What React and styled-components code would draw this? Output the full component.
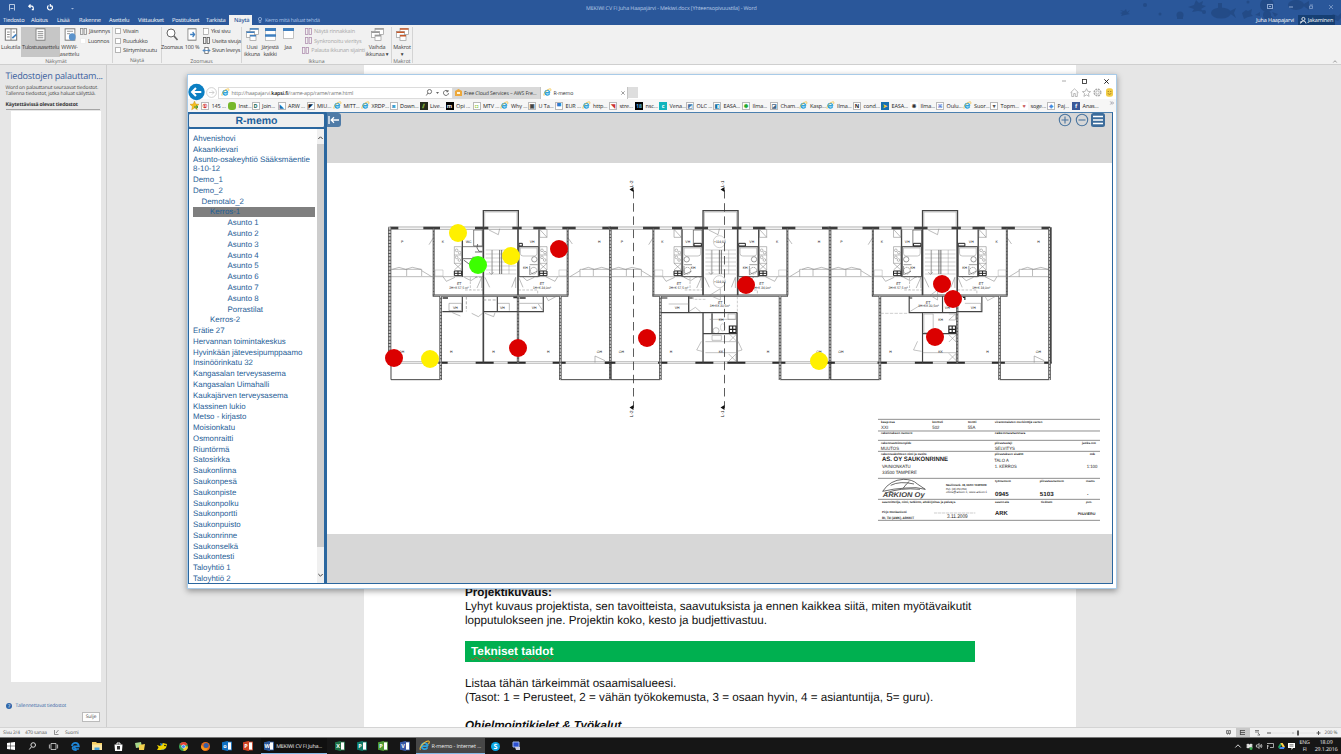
import React from "react";
import styled, { createGlobalStyle } from "styled-components";

const GlobalStyle = createGlobalStyle`
  * { box-sizing: border-box; }
  html, body { margin: 0; padding: 0; overflow: hidden; }
  body {
    font-family: "Open Sans", "Noto Sans", sans-serif;
    text-rendering: geometricPrecision;
    white-space: nowrap;
  }
  svg { display: block; flex: none; overflow: visible; }
`;

const Desktop = styled.div`
  position: relative;
  width: 1341px;
  height: 754px;
  display: flex;
  flex-direction: column;
  overflow: hidden;
  background: #e6e6e6;
`;

/* ---------- Word: title, tabs, ribbon ---------- */

const WordHeader = styled.header`
  position: relative;
  height: 25px;
  flex: none;
  background: #2a579a;
  color: #fff;
`;
const TitleBar = styled.div`
  position: relative;
  display: flex;
  align-items: center;
  height: 15px;
`;
const QuickAccess = styled.div`
  display: flex;
  align-items: center;
  width: 586px;
  padding-left: 9px;
`;
const IconSlot = styled.span`
  display: flex;
  width: ${(p) => p.$w}px;
`;
const DocTitle = styled.div`
  width: 170px;
  font-size: 5.4px;
  letter-spacing: ${(p) => p.$ls || 0}px;
  color: #b9cbe6;
`;
const WindowControls = styled.div`
  display: flex;
  align-items: center;
  margin-left: auto;
  margin-top: -2px;
  padding-right: 8px;
  gap: 16px;
`;
const TabBar = styled.nav`
  position: relative;
  display: flex;
  height: 10px;
`;
const Tab = styled.div`
  width: ${(p) => p.$w}px;
  padding-left: ${(p) => p.$pad || 0}px;
  height: 10px;
  line-height: 10px;
  font-size: 5.7px;
  letter-spacing: ${(p) => p.$ls ?? -0.18}px;
  color: ${(p) => (p.$active ? "#2b579a" : "#fff")};
  background: ${(p) => (p.$active ? "#f1f1f1" : "transparent")};
  font-weight: ${(p) => (p.$active ? 600 : 400)};
`;
const TellMe = styled.div`
  display: flex;
  align-items: center;
  gap: 3px;
  padding-left: 6px;
  font-size: 5.4px;
  letter-spacing: -0.22px;
  color: #a9c1e6;
`;
const Account = styled.div`
  display: flex;
  align-items: center;
  margin-left: auto;
  padding-right: 6px;
  gap: 4px;
  font-size: 5.5px;
  letter-spacing: -0.14px;
`;
const ShareButton = styled.div`
  display: flex;
  align-items: center;
  justify-content: center;
  gap: 2px;
  width: 37px;
  height: 10px;
  background: #163f73;
`;
const SeaArt = styled.svg`
  position: absolute;
  right: 0;
  top: 0;
`;

const Ribbon = styled.div`
  position: relative;
  display: flex;
  flex: none;
  height: 40px;
  background: #f1f1f1;
  border-bottom: 1px solid #cfcfcf;
  color: #3c3c3c;
  font-size: 5.5px;
`;
const RibbonGroup = styled.section`
  display: flex;
  flex-direction: column;
  width: ${(p) => p.$w}px;
  border-right: ${(p) => (p.$line ? "1px solid #d4d4d4" : "none")};
  margin: 2px 0 1px;
`;
const GroupBody = styled.div`
  display: flex;
  height: 30px;
  padding-left: ${(p) => p.$pad || 0}px;
`;
const GroupName = styled.div`
  text-align: center;
  font-size: 5.2px;
  line-height: 8px;
  color: #666;
  height: 7px;
`;
const BigButton = styled.div`
  width: ${(p) => p.$w}px;
  height: 30px;
  flex: none;
  display: flex;
  flex-direction: column;
  align-items: center;
  justify-content: flex-start;
  padding-top: ${(p) => p.$top ?? 1}px;
  background: ${(p) => (p.$on ? "#c6c6c6" : "transparent")};
`;
const BigLabel = styled.div`
  margin-top: 2.5px;
  line-height: 7px;
  text-align: center;
  letter-spacing: ${(p) => p.$ls ?? -0.15}px;
  white-space: pre;
`;
const SmallStack = styled.div`
  display: flex;
  flex-direction: column;
  gap: 1.6px;
  padding-top: 0px;
  width: ${(p) => p.$w}px;
`;
const SmallRow = styled.div`
  display: flex;
  align-items: center;
  gap: 2px;
  height: 8px;
  padding-left: 1px;
  color: ${(p) => (p.$off ? "#a8a8a8" : "#3c3c3c")};
  letter-spacing: ${(p) => p.$ls ?? -0.16}px;
`;
const CheckBox = styled.span`
  width: 6px;
  height: 6px;
  flex: none;
  background: #fff;
  border: 0.7px solid ${(p) => (p.$off ? "#eee" : "#b5b5b5")};
`;
const Collapse = styled.div`
  margin: auto 4px 1px auto;
`;

/* ---------- Word: body ---------- */

const Body = styled.main`
  display: flex;
  flex: 1;
  min-height: 0;
  background: #e6e6e6;
`;
const RecoveryPane = styled.aside`
  display: flex;
  flex-direction: column;
  width: 107px;
  border-right: 1px solid #cdcdcd;
  padding: 4px 6px 0 5.5px;
`;
const PaneTitle = styled.h2`
  margin: 0;
  height: 13px;
  line-height: 13px;
  font-size: 9.1px;
  font-weight: 400;
  letter-spacing: -0.22px;
  color: #3c62a0;
`;
const PaneText = styled.p`
  margin: 2.5px 0 0;
  font-size: 5px;
  line-height: 6.1px;
  letter-spacing: -0.09px;
  color: #444;
`;
const PaneSubtitle = styled.div`
  margin-top: 5.8px;
  height: 7.700px;
  font-size: 5.1px;
  line-height: 6.400px;
  font-weight: 700;
  letter-spacing: -0.14px;
  color: #333;
  border-bottom: 1px solid #a5a5a5;
`;
const FileList = styled.div`
  margin: 1px 0 0 5px;
  width: 90px;
  height: 571px;
  background: #fff;
`;
const PaneLink = styled.div`
  display: flex;
  align-items: center;
  gap: 4px;
  margin-top: 20px;
  height: 8px;
  font-size: 4.9px;
  letter-spacing: -0.15px;
  color: #3667a8;
`;
const CloseButton = styled.div`
  align-self: flex-end;
  margin-top: 2px;
  width: 18px;
  height: 10px;
  line-height: 9px;
  text-align: center;
  font-size: 4.8px;
  color: #444;
  background: #fdfdfd;
  border: 0.7px solid #bbb;
`;
const Page = styled.article`
  margin-left: 257px;
  width: 712px;
  padding: 520.500px 101px 0;
  overflow: hidden;
  background: #fff;
  color: #111;
  font-family: "Liberation Sans", Arial, sans-serif;
  font-size: 11.66px;
  line-height: 14px;
`;
const Line = styled.p`
  margin: ${(p) => p.$gap || 0}px 0 0;
  font-weight: ${(p) => (p.$bold ? 700 : 400)};
  font-style: ${(p) => (p.$italic ? "italic" : "normal")};
`;
const GreenBand = styled.h3`
  margin: 13.500px 0 0;
  width: 510px;
  height: 21px;
  padding-left: 6px;
  line-height: 21px;
  font-size: 11.8px;
  color: #fff;
  background: #00b050;
`;
const Misspelt = styled.span`
  text-decoration-line: underline;
  text-decoration-style: wavy;
  text-decoration-color: #b5532b;
  text-decoration-thickness: 0.6px;
  text-decoration-skip-ink: none;
  text-underline-offset: 1px;
`;

const StatusBar = styled.footer`
  display: flex;
  align-items: center;
  flex: none;
  height: 10px;
  padding-left: 3px;
  background: #f1f1f1;
  border-top: 1px solid #d4d4d4;
  font-size: 4.8px;
  color: #555;
`;
const StatusItem = styled.span`
  width: ${(p) => p.$w}px;
  letter-spacing: -0.1px;
`;
const StatusRight = styled.div`
  display: flex;
  align-items: center;
  flex: none;
  gap: 0;
  margin-left: auto;
  width: 120px;
`;
const ZoomSlider = styled.span`
  display: flex;
  margin: 0 4px 0 2px;
`;
const ViewButton = styled.span`
  display: flex;
  align-items: center;
  justify-content: center;
  flex: none;
  width: 14.5px;
  height: 9px;
  background: ${(p) => (p.$on ? "#c8c8c8" : "transparent")};
`;

/* ---------- Taskbar ---------- */

const Taskbar = styled.div`
  display: flex;
  align-items: stretch;
  flex: none;
  height: 17px;
  background: #161616;
  border-top: 1px solid #777;
  color: #eee;
`;
const TaskIcon = styled.span`
  display: flex;
  align-items: center;
  justify-content: center;
  width: 21.6px;
`;
const TaskWindow = styled.div`
  display: flex;
  align-items: center;
  gap: 2px;
  width: ${(p) => p.$w}px;
  margin: 0 ${(p) => p.$mr || 0}px 0 ${(p) => p.$ml || 0}px;
  padding-left: 3px;
  overflow: hidden;
  font-size: 5.4px;
  letter-spacing: ${(p) => p.$ls || 0}px;
  background: ${(p) => (p.$active ? "#474747" : "#101010")};
  border-bottom: 1.2px solid #84b9e6;
`;
const Tray = styled.div`
  display: flex;
  align-items: center;
  margin-left: auto;
  width: 108px;
`;
const TrayIcon = styled.span`
  display: flex;
  justify-content: center;
  width: 10.7px;
`;
const TrayText = styled.div`
  width: ${(p) => p.$w}px;
  text-align: center;
  font-size: 5.3px;
  letter-spacing: -0.12px;
  line-height: 7.3px;
`;

/* ---------- Browser window ---------- */

const Browser = styled.div`
  position: absolute;
  left: 187px;
  top: 74px;
  width: 930px;
  height: 515px;
  display: flex;
  flex-direction: column;
  background: #fff;
  border: 1px solid #a9cbe8;
  box-shadow: 0 2px 6px rgba(0, 0, 0, 0.38);
`;
const BrowserTitle = styled.div`
  display: flex;
  justify-content: flex-end;
  align-items: center;
  height: 11px;
  padding: 1px 7.5px 0 0;
  gap: 16.5px;
`;
const AddressRow = styled.div`
  display: flex;
  align-items: center;
  height: 13px;
`;
const BackButton = styled.span`
  width: 17px;
  height: 17px;
  margin: -3px 0 -2px 0;
  position: relative;
  z-index: 1;
`;
const ForwardButton = styled.span`
  display: flex;
  margin-left: 1px;
`;
const AddressField = styled.div`
  display: flex;
  align-items: center;
  margin-left: 1px;
  width: 235px;
  height: 12px;
  padding-left: 2px;
  gap: 2px;
  border: 1px solid #dcdcdc;
  font-size: 5.3px;
  letter-spacing: -0.16px;
  color: #777;
`;
const Host = styled.b`
  color: #111;
  font-weight: 600;
`;
const AddressTools = styled.span`
  display: flex;
  align-items: center;
  gap: 4px;
  margin-left: auto;
  padding-right: 3px;
`;
const BrowserTab = styled.div`
  display: flex;
  align-items: center;
  gap: 2px;
  width: ${(p) => p.$w}px;
  height: 12px;
  padding-left: 2px;
  font-size: 5.2px;
  letter-spacing: -0.12px;
  color: #333;
  background: ${(p) => (p.$active ? "#fff" : "#d9d9d9")};
  border-right: 1px solid #c4c4c4;
`;
const TabClose = styled.span`
  margin-left: auto;
  padding-right: 2px;
`;
const NewTab = styled.div`
  width: 10px;
  height: 11px;
  background: #dedede;
`;
const ToolIcons = styled.div`
  display: flex;
  gap: 2.6px;
  margin-left: auto;
  padding-right: 2px;
`;
const Favorites = styled.div`
  display: flex;
  align-items: center;
  height: 13px;
  padding-left: 2px;
  background: #f6f6f6;
  font-size: 5.5px;
  color: #222;
`;
const Favorite = styled.div`
  display: flex;
  align-items: center;
  gap: 2.5px;
  width: ${(p) => p.$w}px;
  letter-spacing: -0.1px;
`;
const Favicon = styled.span`
  width: 8px;
  height: 8px;
  flex: none;
  display: flex;
  align-items: center;
  justify-content: center;
  font-size: 5.5px;
  line-height: 6px;
  font-weight: 700;
  color: ${(p) => p.$fg || "#fff"};
  background: ${(p) => p.$bg};
  border: ${(p) => (p.$framed ? "1px solid #b9b9b9" : "none")};
  border-radius: ${(p) => p.$r || 0}px;
`;

/* ---------- R-memo ---------- */

const Memo = styled.div`
  display: flex;
  height: 472px;
  margin-right: 3px;
  background: #2b679f;
`;
const MemoSide = styled.div`
  display: flex;
  flex-direction: column;
  width: 137px;
  padding: 1px 0 1px;
  gap: 1px;
`;
const MemoHeading = styled.h1`
  margin: 0;
  height: 15px;
  line-height: 14px;
  text-align: center;
  font-family: "Liberation Sans", Arial, sans-serif;
  font-size: 10.5px;
  color: #1c609b;
  background: #eee;
  border: 1px solid #2b679f;
  border-radius: 2px;
`;
const TreeBox = styled.div`
  display: flex;
  flex: 1;
  min-height: 0;
  border: 1px solid #2b679f;
  border-width: 0 1px 0 1px;
  background: #fff;
`;
const Tree = styled.ul`
  margin: 0;
  padding: 3.9px 2px 0 4px;
  width: 128px;
  list-style: none;
  overflow: hidden;
  font-family: "Liberation Sans", Arial, sans-serif;
  font-size: 7.88px;
  line-height: 9px;
  color: #1f6097;
`;
const TreeItem = styled.li`
  padding: 0.9px 0 0.9px ${(p) => p.$indent}px;
  white-space: pre;
  background: ${(p) => (p.$on ? "#7f7f7f" : "transparent")};
`;
const ScrollTrack = styled.div`
  display: flex;
  flex-direction: column;
  align-items: center;
  justify-content: space-between;
  width: 7px;
  padding: 7px 0 6px;
  background: #f0f0f0;
`;
const ScrollThumb = styled.div`
  width: 7px;
  height: 403px;
  margin: 4px 0 auto;
  background: #cdcdcd;
`;
const Viewer = styled.section`
  position: relative;
  display: flex;
  flex-direction: column;
  width: 788px;
  margin-left: 1px;
  border: 1px solid #2b679f;
  border-top-color: #4b7fae;
  background: #d7d7d7;
`;
const ViewerBar = styled.div`
  display: flex;
  align-items: flex-start;
  justify-content: space-between;
  height: 50px;
`;
const ViewerTools = styled.div`
  display: flex;
  align-items: center;
  gap: 2.5px;
  padding-right: 7px;
`;
const PlanCanvas = styled.div`
  position: relative;
  height: 370.5px;
  overflow: hidden;
  background: #fff;
`;
const Pin = styled.span`
  position: absolute;
  left: ${(p) => p.$x - 327 - 9}px;
  top: ${(p) => p.$y - 163 - 9}px;
  width: 18px;
  height: 18px;
  border-radius: 50%;
  background: ${(p) => p.$c};
`;

/* ---------- Data ---------- */

const tabs = [
  ["Tiedosto", 28], ["Aloitus", 26], ["Lisää", 22], ["Rakenne", 30], ["Asettelu", 29],
  ["Viittaukset", 34], ["Postitukset", 34], ["Tarkista", 23],
];

const tree = [
  ["Ahvenishovi"], ["Akaankievari"], ["Asunto-osakeyhtiö Sääksmäentie\n8-10-12"], ["Demo_1"],
  ["Demo_2"], ["Demotalo_2", 8.5], ["Kerros-1", 17, true], ["Asunto 1", 34.5], ["Asunto 2", 34.5],
  ["Asunto 3", 34.5], ["Asunto 4", 34.5], ["Asunto 5", 34.5], ["Asunto 6", 34.5],
  ["Asunto 7", 34.5], ["Asunto 8", 34.5], ["Porrastilat", 34.5], ["Kerros-2", 17],
  ["Erätie 27"], ["Hervannan toimintakeskus"], ["Hyvinkään jätevesipumppaamo"],
  ["Insinöörinkatu 32"], ["Kangasalan terveysasema"], ["Kangasalan Uimahalli"],
  ["Kaukajärven terveysasema"], ["Klassinen lukio"], ["Metso - kirjasto"], ["Moisionkatu"],
  ["Osmonraitti"], ["Riuntörmä"], ["Satosirkka"], ["Saukonlinna"], ["Saukonpesä"],
  ["Saukonpiste"], ["Saukonpolku"], ["Saukonportti"], ["Saukonpuisto"], ["Saukonrinne"],
  ["Saukonselkä"], ["Saukontesti"], ["Taloyhtiö 1"], ["Taloyhtiö 2"],
];

const favorites = [
  ["145 ...", 27, "#fff", "①", "#c22", 1], ["Inst...", 23.5, "#76b82a", "", "#fff", 0, 3],
  ["Join...", 26, "#fff", "D", "#176b5b", 1], ["ARW ...", 29, "#fff", "◣", "#1b6fb0", 1],
  ["MIU...", 26, "#fff", "◤", "#123", 1], ["MITT...", 28, "ie"], ["XRDP...", 29, "ie"],
  ["Down...", 30, "#fff", "◙", "#39c", 1], ["Live...", 26, "#232b1c", "⫽", "#9ac93c"],
  ["Opi ...", 27, "#000", "m"], ["MTV ...", 27.5, "#fff", "◘", "#8cc63f", 1],
  ["Why ...", 28, "ie"], ["U Ta...", 27, "#fff", "▣", "#444", 1], ["EUR ...", 27, "#fff", "▀", "#2a7fd0", 1],
  ["http...", 27, "ie"], ["stre...", 26, "#fff", "◥", "#c33", 1], ["nsc...", 24, "#000", "18", "#5ad"],
  ["Vena...", 27, "#12b5bd", "c"], ["OLC ...", 27, "#fff", "◩", "#47a", 1],
  ["EASA...", 29, "#fff", "◧", "#17a", 1], ["Ilma...", 28, "#fff", "✽", "#2a3", 1],
  ["Cham...", 29, "#fff", "◪", "#468", 1], ["Kasp...", 27, "ie"], ["Ilma...", 27, "ie"],
  ["cond...", 28, "#fff", "N", "#222", 1], ["EASA...", 29, "#1570b0", "➤", "#fc3"],
  ["Ilma...", 26, "#fff", "❋", "#333"], ["Oulu...", 27, "#fff", "※", "#36c", 1],
  ["Suor...", 27, "ie"], ["Topm...", 30, "#fff", "▾", "#555", 1], ["soge...", 27, "#fff", "♥", "#c66"],
  ["Paj...", 25, "#fff", "◈", "#48d", 1], ["Anas...", 38, "#3b5998", "f"],
];

const RED = "#db0000";
const YELLOW = "#fff000";
const pins = [
  [458, 233, YELLOW], [478, 265, "#3cff00"], [511, 255.5, YELLOW], [559, 249, RED],
  [393.5, 358, RED], [430, 359, YELLOW], [518, 348, RED], [647, 338, RED],
  [746, 285, RED], [818.5, 360.5, YELLOW], [942, 284, RED], [953, 299, RED], [934.5, 337, RED],
];

/* ---------- Icons ---------- */

const Ie = ({ s = 8.5 }) => (
  <svg width={s} height={s} viewBox="0 0 16 16" fill="none">
    <path d="M13 9H3.5a4.8 4.8 0 0 0 9 1.8M3.6 7.4a4.8 4.8 0 0 1 9.2 1.4" stroke="#2fa4de" strokeWidth="2.6" />
    <path d="M2 14.5C-.5 11 9 1 14 1.600c1.800.7.8 3-.3 4.400" stroke="#f1bd34" strokeWidth="1.5" />
  </svg>
);
const PageIcon = ({ s = 13, children, w }) => (
  <svg width={w || s} height={s} viewBox="0 0 16 16" preserveAspectRatio="none">
    <rect x="1.500" y="1" width="13" height="14" fill="#fff" stroke="#777" strokeWidth="1.200" />
    {children || <path d="M4 4.500h8M4 7h8M4 9.500h8M4 12h8" stroke="#777" strokeWidth="1.100" />}
  </svg>
);
const WindowIcon = ({ n = 1, w = 11, h = 13 }) => (
  <svg width={w} height={13} viewBox="0 0 11 13">
    <rect x=".4" y=".4" width="10.200" height={h - 0.8} fill="#fff" stroke="#aaa" strokeWidth=".7" />
    <path d="M0 1.500h11" stroke="#3f7fbf" strokeWidth="3" />
    {n > 1 && <path d="M0 7.500h11" stroke="#3f7fbf" strokeWidth="2.500" />}
  </svg>
);
const Cascade = ({ color = "#3f7fbf" }) => (
  <svg width="13" height="13" viewBox="0 0 13 13" fill="#fff" stroke="#999" strokeWidth=".7">
    <rect x="4" y=".5" width="8.500" height="6" /><rect x=".5" y="3.500" width="8" height="6" />
    <rect x="4" y="7" width="6" height="5.500" />
    <path d="M4 1h8.500M.5 4.200h8M4 7.700h6" stroke={color} strokeWidth="1.600" />
  </svg>
);
const TinyIcon = ({ c = "#888" }) => (
  <svg width="7" height="7" viewBox="0 0 7 7" fill="none" stroke={c} strokeWidth=".8">
    <rect x=".5" y=".5" width="2.400" height="6" /><rect x="4.100" y=".5" width="2.400" height="6" />
  </svg>
);
const WidthIcon = () => (
  <svg width="7" height="7" viewBox="0 0 7 7" fill="#fff" stroke="#666" strokeWidth=".8">
    <rect x="1.800" y=".5" width="3.400" height="6" />
    <path d="M0 3.500h7M1.500 2 0 3.500 1.500 5M5.500 2 7 3.500 5.500 5" fill="none" stroke="#3f7fbf" />
  </svg>
);
const Sheet = ({ letter, c }) => (
  <svg width="10" height="10" viewBox="0 0 10 10">
    <rect x="4" y="1" width="5.500" height="8" fill="#fff" stroke={c} strokeWidth=".8" />
    <path d="M0 1.200 6 0v10L0 8.800z" fill={c} />
    <text x="3" y="7" textAnchor="middle" fontSize="5.500" fontWeight="700" fill="#fff">{letter}</text>
  </svg>
);

/* ---------- Floor plan ---------- */

const T = ({ x, y, children, w, size = 10.5, bold, fill = "#1c1c1c" }) => (
  <text x={x} y={y} fontSize={size} fontWeight={bold ? 700 : 400} fill={fill}
    textLength={w} lengthAdjust={w ? "spacingAndGlyphs" : undefined}>{children}</text>
);

const Wall = ({ d, w = 7 }) => (
  <>
    <path d={d} stroke="#555" strokeWidth={w} />
    <path d={d} stroke="#c4c4c4" strokeWidth={w - 4.500} strokeDasharray="7 3" />
  </>
);

const Kitchen = ({ x }) => (
  <g stroke="#777" strokeWidth="1.500">
    <path d={`M${x} 178h22v24h-22zM${x} 178l22 24M${x} 230h22v50h-22zM${x} 255h22M${x} 280l22 20v-20l-22 20`} />
    <circle cx={x + 7} cy="241" r="4" /><circle cx={x + 16} cy="248" r="4" />
    <circle cx={x + 7} cy="262" r="4" /><circle cx={x + 15} cy="270" r="4" />
    <path d={`M${x} 303h22v14h-22zM${x + 11} 303v14M${x} 310h22`} stroke="#222" strokeWidth="3" />
  </g>
);

const Bath = ({ x, w = 60, flip }) => (
  <g stroke="#555" strokeWidth="1.700">
    <path d={`M${x} 230h${w}v90h-${w}z`} strokeWidth="3" />
    <path d={`M${x + 4} 234h${w - 8}v16q0 8-8 8h-${w - 24}q-8 0-8-8z`} stroke="#999" />
    <ellipse cx={flip ? x + w - 12 : x + 12} cy="268" rx="8" ry="8" />
    <circle cx={flip ? x + w - 14 : x + 14} cy="302" r="10" strokeDasharray="4 2" />
    <path d={`M${flip ? x + w - 26 : x + 4} 284h24M${flip ? x + w - 26 : x + 4} 288v26l22-10`} />
    <text x={flip ? x + 12 : x + w - 34} y="298" fontSize="10.5" stroke="none" fill="#222">KH</text>
  </g>
);

const Block = ({ kind, x }) => (
  <g transform={`translate(${x} 170) scale(.33333)`} fill="none">
    <g stroke="#777" strokeWidth="1.500">
      <path d="M48 320H325M430 320H708M48 298h92v20M95 298v20M615 298h92M655 298v20M615 298v22" />
      <path d="M52 298l20-6 20 6 20-6 26 6M622 298l18-6 18 6 22-6 22 6" />
      <path d="M180 300h24v18h-24zM552 300h24v18h-24z" stroke="#aaa" />
      <path d="M140 302l30 18M615 302l-30 18M162 224l14-22v22M592 222l-14-20v22M204 320l10 14 26-12M548 320l-8 14-28-14M268 322l20 10 18-12M478 322l-22 10-14-12" />
      <path d="M306 354l14-32v32M344 352l-14-30M410 352l12-30v32M444 352l-12-28M342 180l28 14 4-18M660 578v-20l30 14" />
    </g>
    <g stroke="#9a9a9a" strokeWidth="1.400">
      <path d="M332 240h92M332 252h92M332 264h92M332 276h92M332 288h92M332 300h92M332 312h92M350 240v72M402 240v72" />
      <path d="M374 240v72M380 240v72" stroke="#555" strokeWidth="2.500" />
      <path d="M342 306l7 8 7-8M352 312v-72" stroke="#777" />
    </g>
    <path d="M262 176v144M492 176v144" stroke="#444" strokeWidth="4" />
    <path d="M262 230h62M430 230h62M296 180h26v48h-26z" stroke="#444" strokeWidth="2" />
    <Kitchen x={238} />
    <Kitchen x={494} />
    {kind === 0 ? (
      <path d="M262 266h62M292 262h14M308 222q-6 12 4 22h10M266 270l24 18M300 246h22" stroke="#555" strokeWidth="2.500" />
    ) : (
      <Bath x={264} w={58} />
    )}
    <Bath x={432} w={58} flip />
    <path d={kind === 0 ? "M432 220h10v8h-10z" : "M298 220h22v8h-22zM432 220h20v8h-20z"} stroke="#222" strokeWidth="3" />
    <path d="M176 322v52M578 322v52M286 322v38M300 322h24M430 360h58v14M270 360h54" stroke="#888" strokeWidth="1.500" strokeDasharray="8 4" />

    {/* outer walls and windows */}
    <path d="M40 171H708M40 178H708" stroke="#888" strokeWidth="2" />
    <path d="M45 174H70M145 174H195M232 174H262M300 174H340M412 174H440M475 174H512M562 174H602M682 174H708" stroke="#3c3c3c" strokeWidth="8" />
    <path d="M40 575H708M40 580H708" stroke="#888" strokeWidth="1.700" />
    <path d={kind === 0 ? "M190 578H218M302 578H356M398 578H452M533 578H572M690 578H712" : "M30 578H62M190 578H218M302 578H356M398 578H452M533 578H572M690 578H712"} stroke="#2c2c2c" strokeWidth="6" />
    <path d="M325 172V122H430V172" stroke="#444" strokeWidth="4" />
    <path d="M329 172V126H426V172" stroke="#888" strokeWidth="1.500" />
    <path d="M48 580V629H197V580M556 580V629H706V580" stroke="#444" strokeWidth="3" />
    <path d="M173 377H580" stroke="#444" strokeWidth="7" />
    <path d="M176 377H578" stroke="#ddd" strokeWidth="2" />
    <path d="M325 320V376M429 176V376M325 176V320" stroke="#444" strokeWidth="5" />
    <Wall d="M176 176V376M578 176V376" w={6} />
    <Wall d="M197 378V630M556 378V630M706 174V630" w={8} />

    {kind === 0 && (
      <g stroke="#444">
        <Wall d="M44 172V580" w={10} />
        <Wall d="M429 376V578" />
        <path d="M325 376V578" strokeWidth="5" />
        <path d="M202 425H262V380M325 425H429M367 380v45M431 425H505V380" strokeWidth="3.500" />
        <path d="M222 400h38v22h-38zM369 400h34v22M433 400h70M505 380v42M490 402l12 18M232 428l24 10M290 430l20 10 15-12M330 430l26 10 4-12M512 378l8 14 26-14" stroke="#777" strokeWidth="1.500" />
        <path d="M274 380v44M325 390h40" stroke="#888" strokeWidth="2" strokeDasharray="9 5" />
        <path d="M203 384h16M434 384h18M415 382h12" stroke="#333" strokeWidth="5" />
      </g>
    )}
    {kind === 1 && (
      <g stroke="#444">
        <path d="M199 428H428M282 378v50" strokeWidth="4" />
        <path d="M325 428V578M427 428V578M325 491h102M352 430v60" strokeWidth="4" />
        <path d="M404 468h20v20h-20zM414 468v20M404 478h20M200 384h18M284 384h10" stroke="#222" strokeWidth="3.500" />
        <path d="M222 402h60M284 424l18-12 16 14M352 496h28v15h-28zM332 548h94M332 515h94M404 492l22 22v-22l-22 22M402 552l22 22v-22l-22 22M320 514l-14 26 16 4M430 514l12 26-14 4M345 376l32-20v34zM400 432h22v16h-22zM345 448h80" stroke="#888" strokeWidth="1.500" />
        <circle cx="364" cy="482" r="9" /><ellipse cx="384" cy="472" rx="7" ry="11" stroke="#888" />
        <circle cx="374" cy="215" r="18" stroke="#777" /><circle cx="374" cy="335" r="18" stroke="#777" />
        <path d="M428 380v45M296 380v8h36" stroke="#999" strokeWidth="1.500" strokeDasharray="8 4" />
      </g>
    )}
    {kind === 2 && (
      <g stroke="#444">
        <Wall d="M429 376V578" />
        <path d="M710 172V580" strokeWidth="5" />
        <path d="M325 428V578M285 378V428H428M385 378v50M429 425H503V380M325 491h102" strokeWidth="3.500" />
        <path d="M404 468h20v20h-20zM414 468v20M404 478h20M446 382h6v8M286 384h8" stroke="#222" strokeWidth="3.500" />
        <path d="M329 432h28v56h-28zM404 494l22 22v-22l-22 22M404 550l22 22v-22l-22 22M404 432h20v18h-20l20-18M348 376l22-16v30zM310 514l-12 26 24 4M452 400h48v22M288 424l30-18M512 378l8 14 26-14M325 548h102" stroke="#888" strokeWidth="1.500" />
        <path d="M199 430h84" stroke="#999" strokeWidth="1.500" strokeDasharray="10 4" />
      </g>
    )}

    <T x={78} y={219}>P</T><T x={200} y={219}>K</T><T x={272} y={219}>{kind ? "VH" : "WC"}</T>
    <T x={464} y={219}>VH</T><T x={544} y={219}>K</T><T x={669} y={219}>H</T>
    <T x={246} y={345}>ET</T><T x={223} y={357} w={58}>2H+K 57,5 m²</T>
    <T x={494} y={345}>ET</T><T x={474} y={357} w={54}>1H+K 34,0m²</T>
    <T x={72} y={548}>OH</T><T x={225} y={548}>H</T><T x={516} y={548}>H</T><T x={665} y={548}>OH</T>
    {kind === 0 && <><T x={352} y={548}>H</T><T x={234} y={417}>VH</T><T x={375} y={417}>VH</T><T x={470} y={417}>VH</T></>}
    {kind === 1 && <><T x={372} y={548}>KK</T><T x={240} y={417}>VH</T><T x={345} y={412} w={60}>1H+KK 30,5m²</T><T x={370} y={401}>ET</T><T x={372} y={452}>KH</T><T x={358} y={218} w={34}>+114,60</T><T x={358} y={338} w={34}>+114,00</T></>}
    {kind === 2 && <><T x={372} y={548}>KK</T><T x={335} y={401}>ET</T><T x={312} y={412} w={62}>1H+KK 30,5m²</T><T x={372} y={452}>KH</T><T x={392} y={417}>VH</T><T x={470} y={417}>VH</T></>}
  </g>
);

const Section = ({ x, n }) => (
  <g stroke="#333" fill="#111">
    <path d={`M${x} 190V408`} strokeWidth=".8" strokeDasharray="8.500 4.700" />
    <path d={`M${x} 187v5l-4-2.500zM${x} 405v5l-4-2.500z`} stroke="none" />
    <g fontSize="4.500" stroke="none">
      <text transform={`translate(${x - 0.500} 187) rotate(-90)`}>L-{n}</text>
      <text transform={`translate(${x - 0.500} 417) rotate(-90)`}>L-{n}</text>
    </g>
  </g>
);

const TitleBlock = () => (
  <g transform="translate(870 410) scale(.33333)">
    <path d="M24 28H690M24 63H690M24 91H690M24 124H690M24 205H690M24 268H690M24 331H690" stroke="#777" strokeWidth="2.500" />
    <T x={33} y={39} w={41} size={9} bold>kaup.osa</T><T x={187} y={39} w={32} size={9} bold>kortteli</T>
    <T x={294} y={39} w={25} size={9} bold>tontti</T><T x={374} y={39} w={143} size={9} bold>viranomaisten merkintöjä varten</T>
    <T x={33} y={56} w={22} size={14}>XXI</T><T x={187} y={56} w={21} size={14}>502</T><T x={293} y={56} w={23} size={14}>55A</T>
    <T x={33} y={72} w={94} size={9} bold>rakennuksen numero</T><T x={374} y={72} w={92} size={9} bold>rakennustunnus</T>
    <T x={33} y={103} w={91} size={9} bold>rakennustoimenpide</T><T x={374} y={103} w={52} size={9} bold>piirustuslaji</T><T x={636} y={103} w={42} size={9} bold>juoks.nro</T>
    <T x={32} y={120} w={55} size={14}>MUUTOS</T><T x={374} y={120} w={61} size={14}>SELVITYS</T>
    <T x={33} y={135} w={137} size={9} bold>rakennuskohteen nimi ja osoite</T><T x={374} y={135} w={86} size={9} bold>piirustuksen sisältö</T><T x={659} y={135} w={16} size={9} bold>mk</T>
    <T x={36} y={152} w={198} size={19} bold>AS. OY SAUKONRINNE</T>
    <T x={36} y={174} w={86} size={14}>VAINIONKATU</T><T x={36} y={193} w={105} size={14}>33500  TAMPERE</T>
    <T x={373} y={155} w={43} size={14}>TALO A</T><T x={374} y={174} w={66} size={14}>1. KERROS</T><T x={650} y={174} w={32} size={14}>1:100</T>
    <g fill="none" stroke="#222" strokeWidth="2">
      <path d="M38 244Q60 210 100 208Q128 208 142 222L166 238Q140 230 108 234Q70 236 38 244M62 226Q90 212 132 222M100 234q10-14 18-20" />
      <path d="M45 250Q90 232 150 238" />
    </g>
    <text x="38" y="262" fontSize="21" fontWeight="700" fontStyle="italic" textLength="126" lengthAdjust="spacingAndGlyphs" fill="#444">ARKION Oy</text>
    <T x={228} y={229} w={122} size={9} bold>Näsilinnank. 48, 33200 TAMPERE</T><T x={228} y={240} w={62} size={9}>Puh. (03) 254 2500</T><T x={228} y={250} w={123} size={9}>office@arkion.fi, www.arkion.fi</T>
    <T x={375} y={216} w={48} size={9} bold>työnumero</T><T x={509} y={216} w={73} size={9} bold>piirustusnumero</T><T x={648} y={216} w={26} size={9} bold>muutos</T>
    <T x={375} y={257} w={41} size={18} bold>0945</T><T x={509} y={257} w={42} size={18} bold>5103</T><T x={651} y={256} size={16} bold>.</T>
    <T x={36} y={280} w={220} size={9} bold>suunnittelija, nimi, tutkinto, allekirjoitus ja päiväys</T>
    <T x={375} y={280} w={42} size={9} bold>suunn.ala</T><T x={513} y={280} w={34} size={9} bold>tiedosto</T><T x={648} y={280} w={18} size={9} bold>pvm.</T>
    <T x={36} y={310} w={74} size={9} bold>Pirjo Honkaniemi</T><T x={36} y={327} w={96} size={10} bold>RI, TkI (AMK), ARKKIT</T>
    <path d="M192 309H316" stroke="#999" strokeWidth="1.500" strokeDasharray="10 2" />
    <T x={231} y={323} w={62} size={16}>3.11.2009</T>
    <T x={375} y={315} w={38} size={18} bold>ARK</T><T x={623} y={314} w={53} size={11} bold>PIILVIERU</T>
  </g>
);

const FloorPlan = () => (
  <svg width="785" height="370" viewBox="327 163 785 370" fontFamily="Liberation Sans, Arial, sans-serif">
    <Block kind={0} x={375} />
    <Block kind={1} x={594.700} />
    <Block kind={2} x={814.200} />
    <Section x={633.500} n={2} />
    <Section x={724.500} n={1} />
    <TitleBlock />
  </svg>
);

/* ---------- Screen parts ---------- */

const WordTop = () => (
  <WordHeader>
    <SeaArt width="251" height="25" viewBox="0 0 251 25" fill="#234b87">
      <path d="M30 10l4 1 2-2 1 3 3-2-2 3 2 1-5 1-4 1 1-2-2-1 3-1zM98 7l6-2 2-5 3 3 4-2-1 4 4 1-5 3 3 3-6-1-6 1 2-3zM152 13l4-3 2 1 4-2-1 5 2 2-5 1-4 2zM240 18l3-4 5 2 3-3 1 4-4 4z" />
      <ellipse cx="55" cy="5" rx="2" ry="2" /><circle cx="70" cy="14" r="1.500" /><circle cx="90" cy="15" r="3.500" /><circle cx="114" cy="12" r="2" />
      <ellipse cx="131" cy="13" rx="10" ry="5.500" /><path d="M128 3h4v6h-4zM138 12l8-4-2 5 2 5z" />
      <circle cx="177" cy="15" r="4" /><circle cx="177" cy="5" r="7" /><circle cx="180" cy="19" r="3" />
      <ellipse cx="206" cy="5" rx="8" ry="5" /><path d="M212 5l7-4v9z" /><circle cx="158" cy="2" r="1.500" />
      <path d="M87 17h6v2h-6zM182 12l6 2-3 3zM170 12l-5 3 5 1z" />
    </SeaArt>
    <TitleBar>
      <QuickAccess>
        <IconSlot $w={19}><svg width="6" height="7" viewBox="0 0 6 7" fill="none" stroke="#dfe8f5"><path d="M.5 6.500V.5h5v6M1.500 4.500h3" strokeWidth=".8" /></svg></IconSlot>
        <IconSlot $w={19}><svg width="6" height="7" viewBox="0 0 6 7" fill="none" stroke="#fff" strokeWidth="1.200"><path d="M2.500.5.8 2.200l1.700 1.700M1 2.200h3q1.500.3 1.300 3.500h-1.500" /></svg></IconSlot>
        <IconSlot $w={24}><svg width="6" height="7" viewBox="0 0 6 7" fill="none" stroke="#fff" strokeWidth="1.200"><path d="M4.500 1.500A2.500 2.500 0 1 1 1.500 1.500M3.300 0v2.200h2.200" /></svg></IconSlot>
        <svg width="3" height="4" viewBox="0 0 3 4"><path d="M0 2l1.500 1.500L3 2z" fill="#9db5d9" /></svg>
      </QuickAccess>
      <DocTitle $ls={-0.13}>MEKIWI CV FI Juha Haapajärvi - Mekiwi.docx [Yhteensopivuustila] - Word</DocTitle>
      <WindowControls>
        <svg width="6" height="5" viewBox="0 0 6 5" fill="none" stroke="#8fa9d2"><rect x=".5" y=".5" width="5" height="4" /><path d="M2 2.500h2" /></svg>
        <svg width="4" height="4" viewBox="0 0 4 4" stroke="#8fa9d2"><path d="M0 2h4" /></svg>
        <svg width="4" height="5" viewBox="0 0 4 5" fill="none" stroke="#8fa9d2" strokeWidth=".7"><path d="M.5 2h3v2.500h-3zM1 1h3" /></svg>
        <svg width="4" height="4" viewBox="0 0 4 4" stroke="#8fa9d2" strokeWidth=".7"><path d="M0 0l4 4M4 0 0 4" /></svg>
      </WindowControls>
    </TitleBar>
    <TabBar>
      {tabs.map(([t, w], i) => <Tab key={t} $w={i ? w : w + 3} $pad={i ? 0 : 3}>{t}</Tab>)}
      <Tab $active $w={23} $pad={5}>Näytä</Tab>
      <TellMe>
        <svg width="4" height="7" viewBox="0 0 4 7" fill="none" stroke="#a9c1e6" strokeWidth=".7"><circle cx="2" cy="2" r="1.600" /><path d="M1.200 3.500v2h1.600v-2" /></svg>
        Kerro mitä haluat tehdä
      </TellMe>
      <Account>
        Juha Haapajarvi
        <ShareButton>
          <svg width="6" height="7" viewBox="0 0 6 7" fill="none" stroke="#fff" strokeWidth=".8"><circle cx="3.400" cy="2" r="1.600" /><path d="M.5 6.500Q1 4 3.400 4T6 6.500M0 5h2" /></svg>
          Jakaminen
        </ShareButton>
      </Account>
    </TabBar>
  </WordHeader>
);

const RibbonBar = () => (
  <Ribbon>
    <RibbonGroup $w={113} $line>
      <GroupBody>
        <BigButton $w={21}><PageIcon w={14}><path d="M8 1v14M3.500 5h3M3.500 8h3M3.500 11h3M10 5h2.500" stroke="#777" strokeWidth="1" /><path d="M9.500 12.500 14 8" stroke="#3f7fbf" strokeWidth="2" /></PageIcon><BigLabel>Lukutila</BigLabel></BigButton>
        <BigButton $w={39} $on><PageIcon w={11} /><BigLabel $ls={-0.32}>Tulostusasettelu</BigLabel></BigButton>
        <BigButton $w={19}><PageIcon w={12}><path d="M4 4h8M4 7h4" stroke="#777" /><circle cx="11" cy="11" r="4.500" fill="#5b93cc" /></PageIcon><BigLabel>{"WWW-\nasettelu"}</BigLabel></BigButton>
        <SmallStack $w={32}>
          <SmallRow><TinyIcon />Jäsennys</SmallRow>
          <SmallRow><CheckBox $off />Luonnos</SmallRow>
        </SmallStack>
      </GroupBody>
      <GroupName>Näkymät</GroupName>
    </RibbonGroup>
    <RibbonGroup $w={49} $line>
      <GroupBody $pad={1}>
        <SmallStack $w={46}>
          <SmallRow><CheckBox />Viivain</SmallRow>
          <SmallRow><CheckBox />Ruudukko</SmallRow>
          <SmallRow><CheckBox />Siirtymisruutu</SmallRow>
        </SmallStack>
      </GroupBody>
      <GroupName>Näytä</GroupName>
    </RibbonGroup>
    <RibbonGroup $w={80} $line>
      <GroupBody>
        <BigButton $w={20}><svg width="12" height="13" viewBox="0 0 12 13" fill="#fff" stroke="#666"><circle cx="5" cy="5" r="4" /><path d="M8 8l3.500 4" strokeWidth="1.600" /></svg><BigLabel $ls={-0.3}>Zoomaus</BigLabel></BigButton>
        <BigButton $w={20}><PageIcon w={10}><path d="M5 8h6M9 5l3 3-3 3" stroke="#3f7fbf" strokeWidth="2" fill="none" /></PageIcon><BigLabel>100 %</BigLabel></BigButton>
        <SmallStack $w={39}>
          <SmallRow $ls={-0.25}><PageIcon s={7} w={6}><path d="M4 5h1" /></PageIcon>Yksi sivu</SmallRow>
          <SmallRow $ls={-0.25}><TinyIcon c="#555" />Useita sivuja</SmallRow>
          <SmallRow $ls={-0.25}><WidthIcon />Sivun leveys</SmallRow>
        </SmallStack>
      </GroupBody>
      <GroupName>Zoomaus</GroupName>
    </RibbonGroup>
    <RibbonGroup $w={150} $line>
      <GroupBody $pad={1}>
        <BigButton $w={18}><Cascade /><BigLabel>{"Uusi\nikkuna"}</BigLabel></BigButton>
        <BigButton $w={18}><WindowIcon n={2} /><BigLabel $ls={-0.22}>{"Järjestä\nkaikki"}</BigLabel></BigButton>
        <BigButton $w={18}><WindowIcon h={11} /><BigLabel>Jaa</BigLabel></BigButton>
        <SmallStack $w={68}>
          <SmallRow $off><IconSlot $w={5} /><TinyIcon c="#b08fb0" />Näytä rinnakkain</SmallRow>
          <SmallRow $off><IconSlot $w={5} /><TinyIcon c="#b08fb0" />Synkronoitu vieritys</SmallRow>
          <SmallRow $off $ls={-0.22}><IconSlot $w={5} /><TinyIcon c="#b08fb0" />Palauta ikkunan sijainti</SmallRow>
        </SmallStack>
        <BigButton $w={24}><Cascade color="#999" /><BigLabel>{"Vaihda\nikkunaa ▾"}</BigLabel></BigButton>
      </GroupBody>
      <GroupName>Ikkuna</GroupName>
    </RibbonGroup>
    <RibbonGroup $w={21} $line>
      <GroupBody>
        <BigButton $w={20}><Cascade color="#c55a2b" /><BigLabel>{"Makrot\n▾"}</BigLabel></BigButton>
      </GroupBody>
      <GroupName>Makrot</GroupName>
    </RibbonGroup>
    <Collapse><svg width="4" height="3" viewBox="0 0 4 3" fill="none" stroke="#777" strokeWidth=".7"><path d="M.3 2.500 2 .7l1.700 1.800" /></svg></Collapse>
  </Ribbon>
);

const WordBody = () => (
  <Body>
    <RecoveryPane>
      <PaneTitle>Tiedostojen palauttam...</PaneTitle>
      <PaneText>Word on palauttanut seuraavat tiedostot.<br />Tallenna tiedostot, jotka haluat säilyttää.</PaneText>
      <PaneSubtitle>Käytettävissä olevat tiedostot</PaneSubtitle>
      <FileList />
      <PaneLink>
        <svg width="6" height="6" viewBox="0 0 6 6"><circle cx="3" cy="3" r="3" fill="#2f67ab" /><text x="3" y="4.800" textAnchor="middle" fontSize="5" fill="#fff">?</text></svg>
        Tallennettavat tiedostot
      </PaneLink>
      <CloseButton>Sulje</CloseButton>
    </RecoveryPane>
    <Page>
      <Line $bold>Projektikuvaus:</Line>
      <Line>Lyhyt kuvaus projektista, sen tavoitteista, saavutuksista ja ennen kaikkea siitä, miten myötävaikutit</Line>
      <Line>lopputulokseen jne. Projektin koko, kesto ja budjettivastuu.</Line>
      <GreenBand><Misspelt>Tekniset</Misspelt> <Misspelt>taidot</Misspelt></GreenBand>
      <Line $gap={14.5}>Listaa tähän tärkeimmät osaamisalueesi.</Line>
      <Line>(Tasot: 1 = Perusteet, 2 = vähän työkokemusta, 3 = osaan hyvin, 4 = asiantuntija, 5= guru).</Line>
      <Line $bold $italic $gap={14}>Ohjelmointikielet &amp; Työkalut</Line>
    </Page>
  </Body>
);

const WordStatus = () => (
  <StatusBar>
    <StatusItem $w={22}>Sivu 2/4</StatusItem>
    <StatusItem $w={29}>470 sanaa</StatusItem>
    <StatusItem $w={11}><svg width="5" height="5" viewBox="0 0 5 5" fill="none" stroke="#666" strokeWidth=".7"><path d="M.5 0v4.500h4M2 3l2.500-3" /></svg></StatusItem>
    <StatusItem $w={30}>Suomi</StatusItem>
    <StatusRight>
      <ViewButton><svg width="5" height="5" viewBox="0 0 5 5" fill="none" stroke="#666" strokeWidth=".8"><path d="M.5.5h1.700v3H.5zM2.800.5h1.700v3H2.800zM1 4.500l1.500-1L4 4.500" /></svg></ViewButton>
      <ViewButton $on><svg width="5" height="5" viewBox="0 0 5 5" stroke="#444" strokeWidth=".8"><path d="M0 .5h5M0 2.500h5M0 4.500h5M.4 0v5" /></svg></ViewButton>
      <ViewButton><svg width="5" height="5" viewBox="0 0 5 5" fill="none" stroke="#666" strokeWidth=".8"><path d="M0 .5h4M0 2h4M3 3l2 2H2.500" /></svg></ViewButton>
      <ZoomSlider>
        <svg width="54" height="6" viewBox="0 0 54 6" stroke="#555"><path d="M0 3h4M49.500 3h4M51.500 1v4" /><path d="M4 3h44" stroke="#e2e2e2" /><path d="M26 2v2" stroke="#999" strokeWidth=".7" /><path d="M31 .5v5" strokeWidth="2" /></svg>
      </ZoomSlider>
      <StatusItem $w={16}>200 %</StatusItem>
    </StatusRight>
  </StatusBar>
);

const BottomBar = () => (
  <Taskbar>
    <TaskIcon><svg width="8" height="8" viewBox="0 0 8 8" fill="#fff"><path d="M0 1 3.500.5v3.200H0zM4 .4 8 0v3.700H4zM0 4.200h3.500v3.300L0 7zM4 4.200h4V8l-4-.5z" /></svg></TaskIcon>
    <TaskIcon><svg width="7" height="8" viewBox="0 0 7 8" fill="none" stroke="#ddd"><circle cx="4.200" cy="3" r="2.300" /><path d="M2.500 4.700.3 7.500" /></svg></TaskIcon>
    <TaskIcon><svg width="9" height="7" viewBox="0 0 9 7" fill="none" stroke="#ddd" strokeWidth=".8"><path d="M2 .5h5v6H2zM.4 1.500v4M8.600 1.500v4" /></svg></TaskIcon>
    <TaskIcon><svg width="9" height="9" viewBox="0 0 16 16" fill="none" stroke="#1e86d8" strokeWidth="3"><path d="M1.500 7Q3 1.500 8 1.700t6 6H6Q6 14 14 12M6 8q-4 1-3 4 2 3 7 2.500" /></svg></TaskIcon>
    <TaskIcon><svg width="10" height="8" viewBox="0 0 10 8"><path d="M0 0h4l1 1h5v7H0z" fill="#f6ce63" /><path d="M0 2.500h10V8H0z" fill="#fbe6a2" /><path d="M2.500 5.500h5V8h-5z" fill="#4aa3dc" /></svg></TaskIcon>
    <TaskIcon><svg width="9" height="9" viewBox="0 0 9 9"><path d="M3 2.500V1h3v1.500" fill="none" stroke="#fff" /><path d="M.5 2.500h8L8 9H1z" fill="#fff" /><path d="M3 4h3v3.500H3z" fill="#333" /></svg></TaskIcon>
    <TaskIcon><svg width="10" height="8" viewBox="0 0 10 8"><path d="M0 1l6-1 1 5-6 1z" fill="#a7d78c" /><path d="M4 3l6-1-1 6H4z" fill="#f2d14e" /></svg></TaskIcon>
    <TaskIcon><svg width="10" height="9" viewBox="0 0 10 9"><path d="M0 3l3 1 3-3 4 1-1 4-3 2H3L0 8l1.500-2.500z" fill="#f1d400" /><path d="M3 1l3 1-2 2zM4 7l4 1H5z" fill="#3b8fd6" /><circle cx="8" cy="3.500" r=".8" /></svg></TaskIcon>
    <TaskIcon><svg width="9" height="9" viewBox="0 0 10 10"><circle cx="5" cy="5" r="5" fill="#3ba757" /><path d="M5 5 .7 2.500A5 5 0 0 1 9.300 2.500z" fill="#e34133" /><path d="M5 5h5a5 5 0 0 1-5 5z" fill="#f7c92e" /><path d="M5 0a5 5 0 0 1 4.300 2.500H5z" fill="#e34133" /><circle cx="5" cy="5" r="2.300" fill="#fff" /><circle cx="5" cy="5" r="1.800" fill="#4a8af4" /></svg></TaskIcon>
    <TaskIcon><svg width="9" height="9" viewBox="0 0 10 10"><circle cx="5" cy="5" r="5" fill="#e36a1b" /><circle cx="5.700" cy="4" r="2.800" fill="#345fa8" /><path d="M0 4q2 0 3 2 2 2 5 0-1 3-4 3.500Q0 9 0 4z" fill="#f59a1d" /></svg></TaskIcon>
    <TaskIcon><Sheet letter="o" c="#0f6fc1" /></TaskIcon>
    <TaskIcon><Sheet letter="P" c="#d04423" /></TaskIcon>
    <TaskWindow $w={66} $ml={2} $mr={2} $ls={-0.18}><Sheet letter="W" c="#2a5699" />MEKIWI CV FI Juha...</TaskWindow>
    <TaskIcon><Sheet letter="X" c="#1e7145" /></TaskIcon>
    <TaskIcon><Sheet letter="P" c="#0d7a68" /></TaskIcon>
    <TaskIcon><Sheet letter="P" c="#4f9a33" /></TaskIcon>
    <TaskIcon><Sheet letter="V" c="#3657a6" /></TaskIcon>
    <TaskWindow $w={69} $active $ls={-0.1}><Ie s={11} />R-memo - Internet ...</TaskWindow>
    <TaskIcon><svg width="9" height="9" viewBox="0 0 10 10"><circle cx="5" cy="5" r="5" fill="#0aa7e6" /><text x="5" y="7.800" textAnchor="middle" fontSize="8" fontWeight="700" fill="#fff">S</text></svg></TaskIcon>
    <TaskIcon><svg width="9" height="9" viewBox="0 0 9 9"><path d="M1 0h6v5H1z" fill="#2b4fd0" stroke="#9db6ee" /><path d="M3 5h5v3H4z" fill="#ccd" /></svg></TaskIcon>
    <Tray>
      <TrayIcon><svg width="6" height="4" viewBox="0 0 6 4" fill="none" stroke="#eee" strokeWidth=".9"><path d="M.3 3.500 3 .8l2.700 2.700" /></svg></TrayIcon>
      <TrayIcon><svg width="7" height="7" viewBox="0 0 7 7"><path d="M0 2 2 .5l1.500 1L5 .5 7 2 5.500 3 7 4 5 5.500 3.500 4.500 2 5.500 0 4l1.500-1z" fill="#e5e5e5" /><circle cx="5" cy="5.500" r="1.500" fill="#37a84a" /></svg></TrayIcon>
      <TrayIcon><svg width="7" height="6" viewBox="0 0 7 6" fill="none" stroke="#ddd" strokeWidth=".8"><path d="M.4 2h1.200L3 .5v5L1.600 4H.4zM4 2q1 1 0 2M5 1q2 2 0 4" /></svg></TrayIcon>
      <TrayIcon><svg width="7" height="6" viewBox="0 0 7 6" fill="none" stroke="#ccc" strokeWidth=".8"><path d="M0 .5h6.500v4H3M.5 2v4M0 3h2" /></svg></TrayIcon>
      <TrayIcon><svg width="7" height="6" viewBox="0 0 7 6"><path d="M2.300 0 0 4l1.200 2 2.300-4z" fill="#1da462" /><path d="M2.300 0h2.400L7 4H4.600z" fill="#ffcf48" /><path d="M1.200 6 2.400 4H7L5.800 6z" fill="#4688f4" /></svg></TrayIcon>
      <TrayIcon><svg width="7" height="7" viewBox="0 0 7 7"><path d="M0 0h7v5H5L3.500 7V5H0z" fill="#fff" /><path d="M1.500 1.700h4M1.500 3.200h4" stroke="#333" strokeWidth=".6" /></svg></TrayIcon>
      <TrayText $w={15}>ENG<br />FI</TrayText>
      <TrayText $w={28}>18.09<br />29.1.2016</TrayText>
    </Tray>
  </Taskbar>
);

const MemoApp = () => (
  <Memo>
    <MemoSide>
      <MemoHeading>R-memo</MemoHeading>
      <TreeBox>
        <Tree>
          {tree.map(([t, indent, on]) => <TreeItem key={t} $indent={indent || 0} $on={on}>{t}</TreeItem>)}
        </Tree>
        <ScrollTrack>
          <svg width="5" height="4" viewBox="0 0 5 4" fill="none" stroke="#444"><path d="M.3 3 2.500.8 4.700 3" /></svg>
          <ScrollThumb />
          <svg width="5" height="4" viewBox="0 0 5 4" fill="none" stroke="#444"><path d="M.3 1 2.500 3.200 4.700 1" /></svg>
        </ScrollTrack>
      </TreeBox>
    </MemoSide>
    <Viewer>
      <ViewerBar>
        <svg width="14" height="14" viewBox="0 0 14 14"><path d="M0 0h11a3 3 0 0 1 3 3v8a3 3 0 0 1-3 3H0z" fill="#4f7ba7" /><path d="M2 3v8M4 7h8M7 4.200 4.200 7 7 9.800" fill="none" stroke="#fff" strokeWidth="1.300" /></svg>
        <ViewerTools>
          <svg width="14" height="14" viewBox="0 0 14 14" fill="none" stroke="#4a759f" strokeWidth="1.100"><circle cx="7" cy="7" r="5.700" /><path d="M3.500 7h7M7 3.500v7" /></svg>
          <svg width="14" height="14" viewBox="0 0 14 14" fill="none" stroke="#4a759f" strokeWidth="1.100"><circle cx="7" cy="7" r="5.700" /><path d="M3.500 7h7" /></svg>
          <svg width="14" height="14" viewBox="0 0 14 14"><rect width="14" height="14" rx="2.500" fill="#3c6c9b" /><path d="M2 3.500h10M2 7h10M2 10.500h10" stroke="#fff" strokeWidth="1.600" /></svg>
        </ViewerTools>
      </ViewerBar>
      <PlanCanvas>
        <FloorPlan />
        {pins.map(([x, y, c]) => <Pin key={`${x}-${y}`} $x={x} $y={y} $c={c} />)}
      </PlanCanvas>
    </Viewer>
  </Memo>
);

const BrowserWindow = () => (
  <Browser>
    <BrowserTitle>
      <svg width="4" height="6" viewBox="0 0 4 6" stroke="#aaa"><path d="M0 3h4" /></svg>
      <svg width="5" height="5" viewBox="0 0 5 5" fill="none" stroke="#222" strokeWidth=".8"><rect x=".5" y=".5" width="4" height="4" /></svg>
      <svg width="5" height="5" viewBox="0 0 5 5" stroke="#111" strokeWidth=".9"><path d="M.3.3l4.400 4.400M4.700.3.3 4.700" /></svg>
    </BrowserTitle>
    <AddressRow>
      <BackButton><svg width="17" height="17" viewBox="0 0 16 16"><circle cx="8" cy="7.500" r="7.700" fill="#0b7fc3" /><path d="M4 7.500h8.500M7.500 3.700 3.800 7.500l3.700 3.800" fill="none" stroke="#fff" strokeWidth="1.900" /></svg></BackButton>
      <ForwardButton><svg width="11" height="11" viewBox="0 0 11 11" fill="none" stroke="#bdbdbd" strokeWidth=".7"><circle cx="5.500" cy="5.500" r="4.900" /><path d="M3 5.500h5M6 3.500l2 2-2 2" /></svg></ForwardButton>
      <AddressField>
        <Ie />
        <span>http://haapajarvi.<Host>kapsi.fi</Host>/rame-app/rame/rame.html</span>
        <AddressTools>
          <svg width="6" height="7" viewBox="0 0 6 7" fill="none" stroke="#555" strokeWidth=".8"><circle cx="3.500" cy="2.600" r="2.100" /><path d="M2 4 .3 6.500" /></svg>
          <svg width="3" height="2" viewBox="0 0 3 2" fill="#666"><path d="M0 0h3L1.500 2z" /></svg>
          <svg width="6" height="6" viewBox="0 0 6 6" fill="none" stroke="#555" strokeWidth=".9"><path d="M4.800 1.200a2.500 2.500 0 1 0 .7 2M5 0v1.700H3.300" /></svg>
        </AddressTools>
      </AddressField>
      <BrowserTab $w={88}>
        <svg width="7" height="7" viewBox="0 0 7 7"><path d="M0 2l3.500-2L7 2v5H0z" fill="#eda83a" /><path d="M2 3h3v2H2z" fill="#fff5da" /></svg>
        Free Cloud Services – AWS Fre...
      </BrowserTab>
      <BrowserTab $active $w={87}>
        <Ie />R-memo
        <TabClose><svg width="4" height="4" viewBox="0 0 4 4" stroke="#777" strokeWidth=".7"><path d="M.3.300l3.400 3.400M3.700.3.300 3.700" /></svg></TabClose>
      </BrowserTab>
      <NewTab />
      <ToolIcons>
        <svg width="9" height="9" viewBox="0 0 9 9" fill="none" stroke="#aaa" strokeWidth=".8"><path d="M.5 4.700 4.500.8l4 3.900M1.700 4v4.500h2v-3h1.600v3h2V4" /></svg>
        <svg width="9" height="9" viewBox="0 0 9 9" fill="none" stroke="#aaa" strokeWidth=".8"><path d="M4.500.6l1.200 2.700 2.900.3-2.200 1.900.7 2.900-2.600-1.500-2.600 1.500.7-2.900L.4 3.600l2.900-.3z" /></svg>
        <svg width="9" height="9" viewBox="0 0 9 9" fill="none" stroke="#aaa"><circle cx="4.500" cy="4.500" r="3.300" strokeWidth="1.500" strokeDasharray="1.800 .8" /><circle cx="4.500" cy="4.500" r="1.600" strokeWidth=".8" /></svg>
        <svg width="9" height="9" viewBox="0 0 9 9"><rect x="1" y=".3" width="7" height="8.500" rx="2.500" fill="#f2cc45" /><circle cx="3.200" cy="3.500" r=".5" fill="#7a5c10" /><circle cx="5.800" cy="3.500" r=".5" fill="#7a5c10" /><path d="M2.700 5.500q1.800 1.600 3.600 0" fill="none" stroke="#7a5c10" strokeWidth=".6" /></svg>
      </ToolIcons>
    </AddressRow>
    <Favorites>
      <IconSlot $w={11}><svg width="9" height="9" viewBox="0 0 9 9"><path d="M4.500 0l1.300 3 3.200.3-2.400 2.200.7 3.300-2.800-1.700-2.800 1.700.7-3.300L0 3.300 3.200 3z" fill="#f4bd22" stroke="#c88d0d" strokeWidth=".4" /><path d="M4 6h4M6 4.500 8 6 6 7.500" stroke="#3b9a3b" fill="none" /></svg></IconSlot>
      {favorites.map(([t, w, bg, g, fg, framed, r], i) => (
        <Favorite key={i} $w={w}>
          {bg === "ie" ? <Ie /> : <Favicon $bg={bg} $fg={fg} $framed={framed} $r={r}>{g}</Favicon>}
          {t}
        </Favorite>
      ))}
      <svg width="4" height="9" viewBox="0 0 4 9" fill="none" stroke="#667" strokeWidth=".6"><path d="M.3.500l1.400 1.500L.3 3.500M2.100.5l1.400 1.500-1.400 1.500" /></svg>
    </Favorites>
    <MemoApp />
  </Browser>
);

export default function App() {
  return (
    <>
      <GlobalStyle />
      <Desktop>
        <WordTop />
        <RibbonBar />
        <WordBody />
        <WordStatus />
        <BottomBar />
        <BrowserWindow />
      </Desktop>
    </>
  );
}
